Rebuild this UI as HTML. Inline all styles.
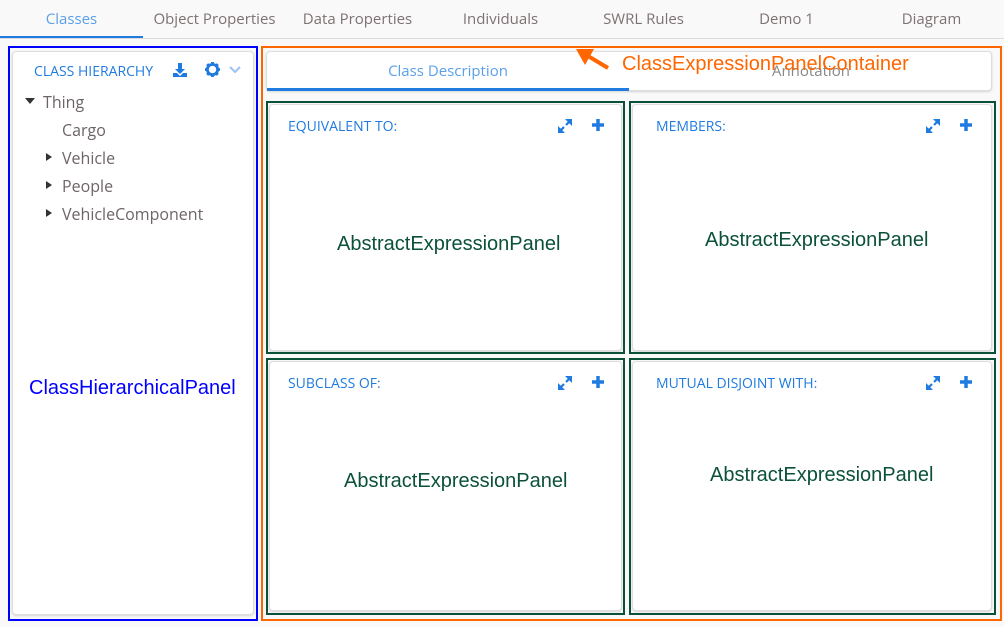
<!DOCTYPE html>
<html><head><style>
*{box-sizing:border-box;margin:0;padding:0}
body{width:1004px;height:627px;background:#f9f9f9;font-family:"Open Sans","Liberation Sans",sans-serif;position:relative;overflow:hidden}
.a{position:absolute}
.tab{position:absolute;top:9px;font-size:15px;color:#7d7072;text-align:center}
.card{position:absolute;background:#fff;border:1px solid #ddd;border-radius:4px;box-shadow:0 1px 2px rgba(0,0,0,.15)}
.gb{position:absolute;border:2px solid #0b5138}
.ttl{position:absolute;font-size:14px;color:#1f7be0}
.aep{position:absolute;font-family:"Liberation Sans",sans-serif;font-size:20px;color:#0b5138}
.tree{position:absolute;font-size:16px;color:#6d6467}
.tri{position:absolute;width:0;height:0;border-top:4px solid transparent;border-bottom:4px solid transparent;border-left:6px solid #333}
</style></head><body>
<div class="a" style="left:0;top:38px;width:1004px;height:1px;background:#ddd"></div>
<div class="a" style="left:0;top:36px;width:143px;height:2px;background:#1f7be0"></div>
<div class="tab" style="left:0;width:143px;color:#5aa0e8">Classes</div>
<div class="tab" style="left:143px;width:143px">Object Properties</div>
<div class="tab" style="left:286px;width:143px">Data Properties</div>
<div class="tab" style="left:429px;width:143px">Individuals</div>
<div class="tab" style="left:572px;width:143px">SWRL Rules</div>
<div class="tab" style="left:715px;width:143px">Demo 1</div>
<div class="tab" style="left:860px;width:143px">Diagram</div>

<div class="a" style="left:8px;top:46px;width:250px;height:575px;border:2px solid #00f"></div>
<div class="card" style="left:12px;top:51px;width:242px;height:564px"></div>
<div class="ttl" style="left:34px;top:62px">CLASS HIERARCHY</div>
<svg class="a" style="left:172px;top:62px" width="16" height="16" viewBox="0 0 16 16"><path d="M6 1h4v6h3l-5 5-5-5h3z M1 11h4l3 3 3-3h4v4H1z" fill="#1f7be0"/></svg>
<svg class="a" style="left:205px;top:62px" width="15" height="15" viewBox="0 0 16 16"><circle cx="8" cy="8" r="5.5" fill="none" stroke="#1f7be0" stroke-width="3"/><g stroke="#1f7be0" stroke-width="3"><path d="M8 0v4M8 12v4M0 8h4M12 8h4M2.3 2.3l2.8 2.8M10.9 10.9l2.8 2.8M2.3 13.7l2.8-2.8M10.9 5.1l2.8-2.8"/></g></svg>
<svg class="a" style="left:229px;top:66px" width="12" height="8" viewBox="0 0 12 8"><path d="M1 1l5 5 5-5" fill="none" stroke="#9cc3ee" stroke-width="2"/></svg>
<div class="a" style="left:25px;top:98px;width:0;height:0;border-left:5px solid transparent;border-right:5px solid transparent;border-top:6px solid #333"></div>
<div class="tree" style="left:43px;top:91px">Thing</div>
<div class="tree" style="left:62px;top:119px">Cargo</div>
<div class="tri" style="left:46px;top:153px"></div><div class="tree" style="left:62px;top:147px">Vehicle</div>
<div class="tri" style="left:46px;top:181px"></div><div class="tree" style="left:62px;top:175px">People</div>
<div class="tri" style="left:46px;top:209px"></div><div class="tree" style="left:62px;top:203px">VehicleComponent</div>
<div class="a" style="left:29px;top:377px;font-family:'Liberation Sans',sans-serif;font-size:20px;color:#00f">ClassHierarchicalPanel</div>

<div class="a" style="left:261px;top:46px;width:741px;height:575px;border:2px solid #f60"></div>
<div class="card" style="left:266px;top:51px;width:726px;height:40px"></div>
<div class="a" style="left:267px;top:88px;width:362px;height:3px;background:#1f7be0"></div>
<div class="a" style="left:267px;top:61px;width:362px;text-align:center;font-size:15px;color:#5aa0e8">Class Description</div>
<div class="a" style="left:772px;top:61px;font-size:15px;color:#888">Annotation</div>
<svg class="a" style="left:574px;top:46px" width="40" height="28" viewBox="0 0 40 28"><path d="M34 22L14 10" stroke="#f60" stroke-width="4"/><path d="M2 3l18 0-9 16z" fill="#f60"/></svg>
<div class="a" style="left:622px;top:53px;font-family:'Liberation Sans',sans-serif;font-size:20px;color:#f60">ClassExpressionPanelContainer</div>

<div class="card" style="left:269px;top:104px;width:353px;height:247px"></div>
<div class="card" style="left:632px;top:104px;width:360px;height:247px"></div>
<div class="card" style="left:269px;top:361px;width:353px;height:250px"></div>
<div class="card" style="left:632px;top:361px;width:360px;height:250px"></div>
<div class="gb" style="left:266px;top:101px;width:359px;height:253px"></div>
<div class="gb" style="left:629px;top:101px;width:367px;height:253px"></div>
<div class="gb" style="left:266px;top:358px;width:359px;height:257px"></div>
<div class="gb" style="left:629px;top:358px;width:367px;height:257px"></div>

<div class="ttl" style="left:288px;top:117px">EQUIVALENT TO:</div>
<div class="ttl" style="left:656px;top:117px">MEMBERS:</div>
<div class="ttl" style="left:288px;top:374px">SUBCLASS OF:</div>
<div class="ttl" style="left:656px;top:374px">MUTUAL DISJOINT WITH:</div>

<svg width="0" height="0" style="position:absolute"><defs>
<g id="ex"><path d="M2 14l5-5M9 7l5-5" stroke="#1f7be0" stroke-width="2.2"/><path d="M1 8v7h7zM15 8V1H8z" fill="#1f7be0"/></g>
<g id="pl"><path d="M8 2v12M2 8h12" stroke="#1f7be0" stroke-width="3.5"/></g></defs></svg>
<svg class="a" style="left:557px;top:118px" width="16" height="16"><use href="#ex"/></svg>
<svg class="a" style="left:590px;top:117px" width="16" height="16"><use href="#pl"/></svg>
<svg class="a" style="left:925px;top:118px" width="16" height="16"><use href="#ex"/></svg>
<svg class="a" style="left:958px;top:117px" width="16" height="16"><use href="#pl"/></svg>
<svg class="a" style="left:557px;top:375px" width="16" height="16"><use href="#ex"/></svg>
<svg class="a" style="left:590px;top:374px" width="16" height="16"><use href="#pl"/></svg>
<svg class="a" style="left:925px;top:375px" width="16" height="16"><use href="#ex"/></svg>
<svg class="a" style="left:958px;top:374px" width="16" height="16"><use href="#pl"/></svg>

<div class="aep" style="left:337px;top:233px">AbstractExpressionPanel</div>
<div class="aep" style="left:705px;top:229px">AbstractExpressionPanel</div>
<div class="aep" style="left:344px;top:470px">AbstractExpressionPanel</div>
<div class="aep" style="left:710px;top:464px">AbstractExpressionPanel</div>
</body></html>
